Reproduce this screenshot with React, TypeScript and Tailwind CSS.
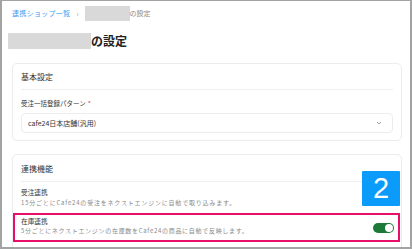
import React from "react";

export default function App() {
  return (
    <div
      className="w-[412px] h-[249px] overflow-hidden bg-white border-t border-l-2 border-r-2 border-b-2 border-[#a3a3a3]"
      style={{ fontFamily: '"Noto Sans CJK JP", "Noto Sans", sans-serif' }}
    >
      <div className="pl-[10px] pr-[8px]">
        {/* breadcrumb */}
        <div className="flex items-center h-[15px] mt-[5px] text-[7px] leading-none">
          <span className="text-[#3b9cf2] tracking-[0.3px]">連携ショップ一覧</span>
          <span className="mx-[6px] text-[#999] text-[7px]">›</span>
          <span className="w-[45px] h-[15px] bg-[#d9d9d9]" />
          <span className="text-[#8a8a8a]">の設定</span>
        </div>
        {/* title */}
        <div className="flex items-center mt-[12px] h-[16px] -ml-[4px]">
          <span className="w-[83px] h-[16px] bg-[#d9d9d9]" />
          <span className="text-[12px] font-bold text-[#222] leading-none">の設定</span>
        </div>
        {/* card 1 */}
        <div className="mt-[14px] border border-[#ececec] rounded-[5px] px-[8px] pt-[8px] pb-[7px]">
          <div className="text-[8px] text-[#333] leading-none h-[10px] flex items-center">基本設定</div>
          <div className="mt-[7px] border-t border-[#efefef]" />
          <div className="mt-[8px] text-[6.5px] text-[#333] leading-none h-[10px] flex items-center">
            受注一括登録パターン<span className="text-[#e0245e] ml-[2px]">*</span>
          </div>
          <div className="mt-[5px] h-[20px] border border-[#ececec] rounded-[4px] flex items-center justify-between pl-[6px] pr-[10px]">
            <span className="text-[7px] text-[#333] leading-none">cafe24日本店舗(汎用)</span>
            <svg width="6" height="4" viewBox="0 0 6 4">
              <path d="M1 1 L3 3 L5 1" fill="none" stroke="#999" strokeWidth="0.9" />
            </svg>
          </div>
        </div>
        {/* card 2 */}
        <div className="mt-[13px] border border-[#ececec] rounded-[5px] pt-[9px] relative h-[120px]">
          <div className="px-[8px]">
            <div className="text-[8px] text-[#333] leading-none h-[10px] flex items-center">連携機能</div>
            <div className="mt-[7px] border-t border-[#efefef]" />
            <div className="mt-[6px] text-[6.7px] text-[#333] leading-none h-[9px] flex items-center">受注連携</div>
            <div className="mt-[2px] text-[6px] tracking-[0.8px] text-[#8a8a8a] leading-none h-[8px] flex items-center whitespace-nowrap">
              15分ごとにCafe24の受注をネクストエンジンに自動で取り込みます。
            </div>
          </div>
          <div className="mt-[6px] mr-[1px] border-2 border-[#ea0e6b] h-[29px] flex items-start justify-between pl-[6px] pr-[4px]">
            <div className="pt-[2px]">
              <div className="text-[6.7px] text-[#333] leading-none h-[9px] flex items-center">在庫連携</div>
              <div className="mt-[1px] text-[6px] tracking-[0.7px] text-[#8a8a8a] leading-none h-[8px] flex items-center whitespace-nowrap">
                5分ごとにネクストエンジンの在庫数をCafe24の商品に自動で反映します。
              </div>
            </div>
            <div className="mt-[8px] w-[21px] h-[10px] rounded-full bg-[#1b7a37] flex items-center justify-end pr-[1px]">
              <span className="w-[8px] h-[8px] rounded-full bg-white" />
            </div>
          </div>
          <div
            className="absolute right-[1px] top-[16px] w-[38px] h-[35px] bg-[#0b9bfb] rounded-[1px] flex items-center justify-center text-white text-[29px] font-light leading-none"
            style={{ fontFamily: '"Liberation Sans", Arial, sans-serif' }}
          >
            2
          </div>
        </div>
      </div>
    </div>
  );
}
